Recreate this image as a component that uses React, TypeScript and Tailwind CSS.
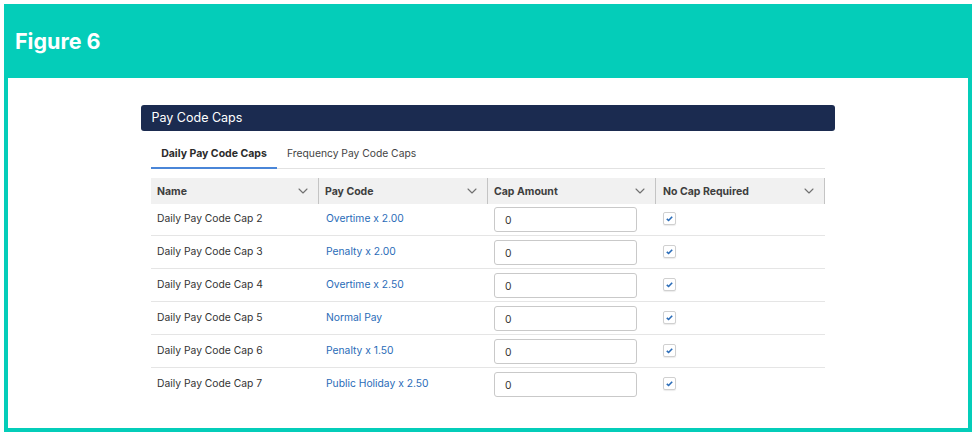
import { ChevronDown } from "lucide-react";

const rows = [
  { name: "Daily Pay Code Cap 2", code: "Overtime x 2.00" },
  { name: "Daily Pay Code Cap 3", code: "Penalty x 2.00" },
  { name: "Daily Pay Code Cap 4", code: "Overtime x 2.50" },
  { name: "Daily Pay Code Cap 5", code: "Normal Pay" },
  { name: "Daily Pay Code Cap 6", code: "Penalty x 1.50" },
  { name: "Daily Pay Code Cap 7", code: "Public Holiday x 2.50" },
];

const headers = ["Name", "Pay Code", "Cap Amount", "No Cap Required"];

export default function App() {
  return (
    <div className="w-[976px] h-[436px] bg-white p-1 font-['Inter',sans-serif]">
      <div className="h-[428px] border-x-4 border-b-4 border-[#04cdb9] flex flex-col">
        <div className="h-[74px] -mx-1 bg-[#04cdb9] pl-[11px] pt-[24px]">
          <h1 className="text-[21.5px] leading-[26px] font-bold text-white">Figure 6</h1>
        </div>

        <div className="ml-[133px] mt-[27px] w-[694px]">
          <div className="h-[26px] bg-[#1b2b50] rounded-[3px] pl-[10.5px] text-[12.5px] leading-[25px] text-white">
            Pay Code Caps
          </div>

          <div className="mx-[10px] w-[674px]">
            <div className="mt-[11px] h-[27px] flex border-b border-[#e2e2e2]">
              <div className="w-[126px] h-[27px] border-b-2 border-[#4a86d8] text-center text-[10.5px] font-bold leading-[24px] text-[#2b2b2b]">
                Daily Pay Code Caps
              </div>
              <div className="pl-[10px] text-[10.3px] leading-[23px] text-[#444444]">Frequency Pay Code Caps</div>
            </div>

            <div className="mt-[9px] grid grid-cols-[168px_169px_168px_169px] h-[26px] bg-[#f1f1f1]">
              {headers.map((h, i) => (
                <div
                  key={h}
                  className={
                    i === 3
                      ? "flex items-center justify-between pt-[2px] pl-[7px] pr-[7px] border-r border-[#c4c4c4] text-[10.5px] font-bold text-[#3e3e3e]"
                      : "flex items-center justify-between pt-[2px] pl-[6px] pr-[7px] border-r border-[#c4c4c4] text-[10.5px] font-bold text-[#3e3e3e]"
                  }
                >
                  {h}
                  <ChevronDown className="w-[16px] h-[16px] -mt-[2px] text-[#707070]" strokeWidth={1.6} />
                </div>
              ))}
            </div>

            <div className="-mt-[1px]">
              {rows.map((row, i) => (
                <div
                  key={row.name}
                  className={
                    i === rows.length - 1
                      ? "grid grid-cols-[168px_169px_168px_169px] h-[33px] pb-[1px] items-center text-[10.3px] border-b border-transparent"
                      : "grid grid-cols-[168px_169px_168px_169px] h-[33px] pb-[1px] items-center text-[10.3px] border-b border-[#e5e5e5]"
                  }
                >
                  <div className="pl-[6px] text-[#333333]">{row.name}</div>
                  <div className="pl-[7px] text-[#2a6cb8]">{row.code}</div>
                  <div className="pl-[6px] pt-[1px]">
                    <div className="w-[143px] h-[25px] border border-[#c9c9c9] rounded-[3px] pl-[10px] leading-[24px] text-[#333333] bg-white">
                      0
                    </div>
                  </div>
                  <div className="pl-[7px]">
                    <div className="w-[13px] h-[13px] border border-[#d0d0d0] rounded-[2px] bg-white flex items-center justify-center shadow-[0_1px_1px_rgba(0,0,0,0.08)]">
                      <svg viewBox="0 0 10 10" className="w-[9px] h-[9px]">
                        <path d="M2 5.4 L4 7.2 L8 3" fill="none" stroke="#2a6cb8" strokeWidth="1.8" />
                      </svg>
                    </div>
                  </div>
                </div>
              ))}
            </div>
          </div>
        </div>
      </div>
    </div>
  );
}
